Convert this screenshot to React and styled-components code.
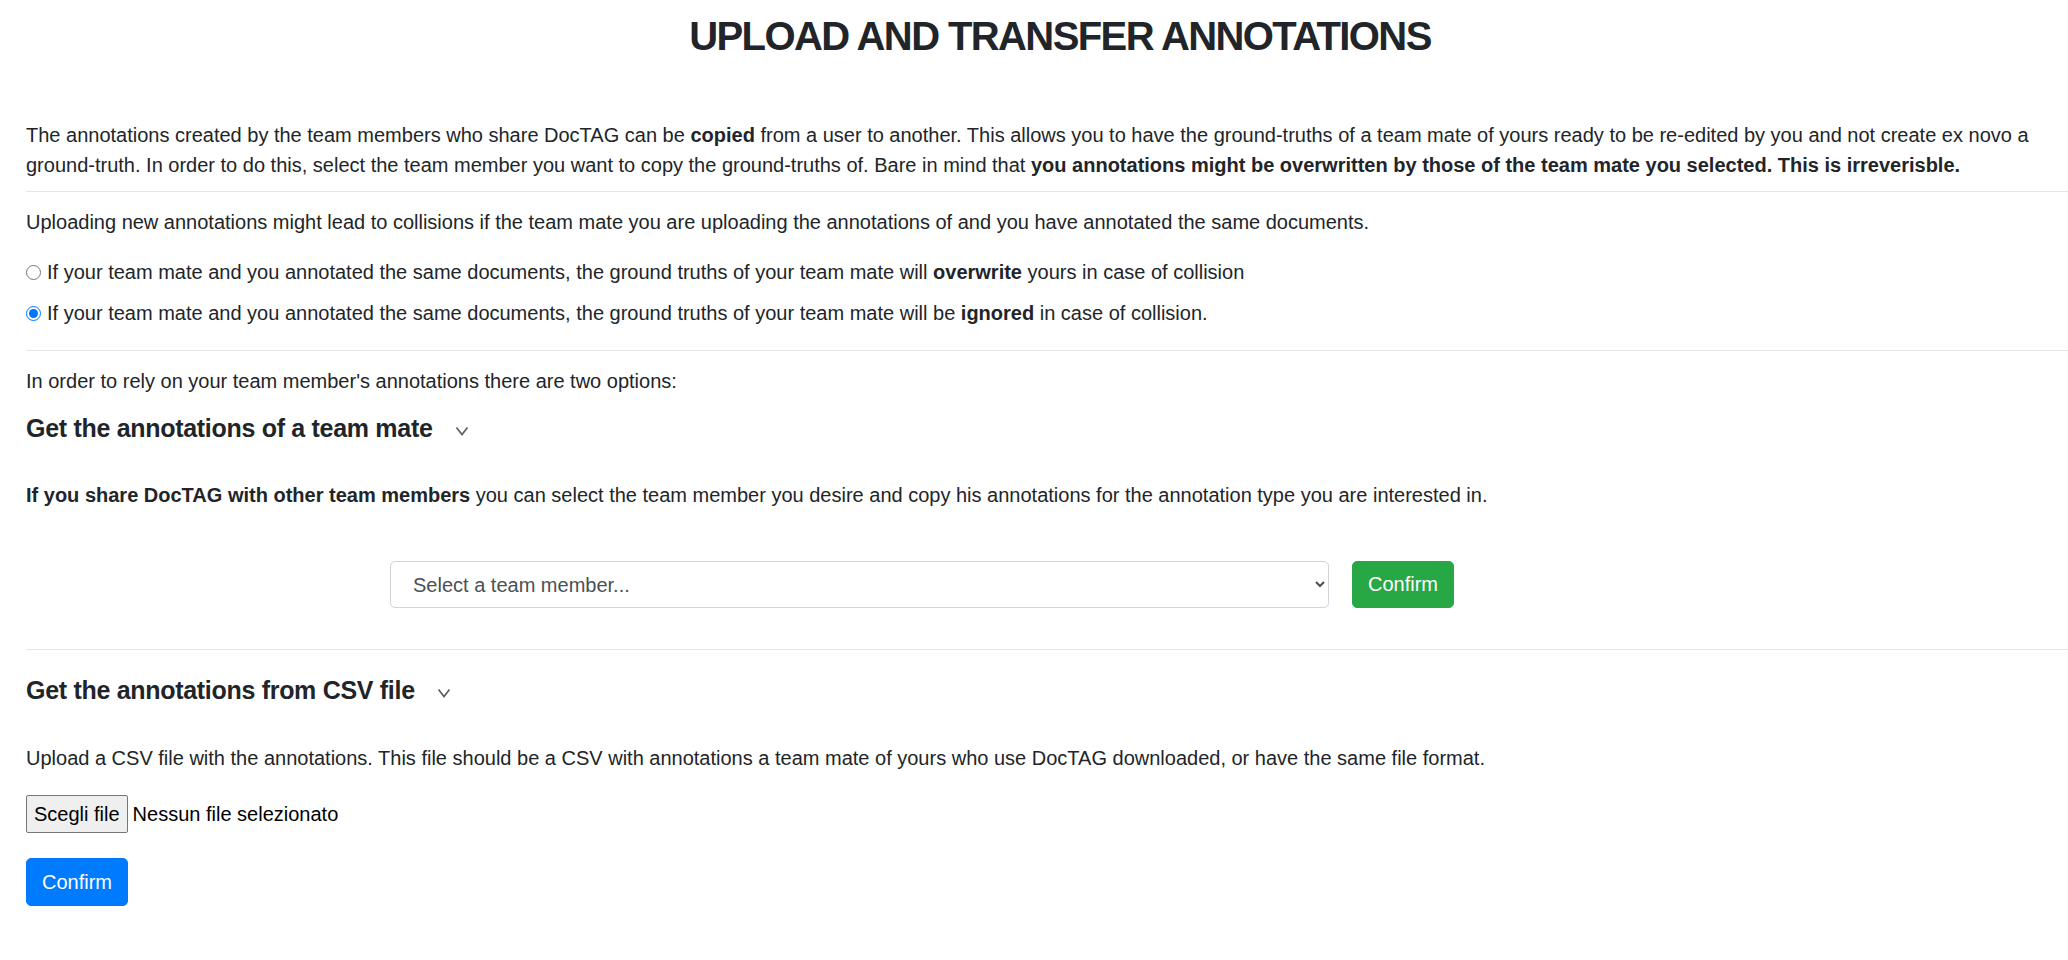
import React from 'react'
import styled, { createGlobalStyle } from 'styled-components'

const GlobalStyle = createGlobalStyle`
  html, body {
    margin: 0;
    padding: 0;
    background: #fff;
    overflow-x: hidden;
  }
  body {
    font-family: "Liberation Sans", Arial, sans-serif;
    font-size: 20px;
    line-height: 30px;
    color: #212529;
  }
  * {
    box-sizing: border-box;
  }
`

const Page = styled.div`
  padding-left: 26px;
  width: calc(100% + 26px);
`
const Title = styled.h2`
  margin: 12px 0 0;
  font-size: 40px;
  line-height: 48px;
  font-weight: 600;
  text-align: center;
  letter-spacing: -1.6px;
`
const Text = styled.p`
  margin: ${props => props.top || 0}px 0 0;
`
const Rule = styled.hr`
  margin: ${props => props.top || 0}px 0 0;
  border: 0;
  border-top: 1px solid rgba(0, 0, 0, 0.1);
`
const RadioRow = styled.label`
  display: flex;
  align-items: center;
  margin-top: ${props => props.top || 0}px;
  input {
    margin: 0 6px 0 0;
    width: 15px;
    height: 15px;
    accent-color: #0075ff;
  }
`
const SectionTitle = styled.h5`
  display: flex;
  align-items: center;
  margin: ${props => props.top || 0}px 0 0;
  font-size: 25px;
  line-height: 30px;
  font-weight: 600;
  letter-spacing: -0.3px;
  svg {
    margin-left: 22px;
    margin-top: 6px;
  }
`
const PickRow = styled.div`
  display: flex;
  align-items: center;
  gap: 23px;
  margin-top: 51px;
  padding-left: 364px;
`
const Select = styled.select`
  width: 939px;
  height: 47px;
  padding: 0 18px;
  font-family: inherit;
  font-size: 20px;
  color: #495057;
  background: #fff;
  border: 1px solid #ced4da;
  border-radius: 5px;
`
const Button = styled.button`
  height: ${props => props.h || 47}px;
  padding: 0 15px;
  font-family: inherit;
  font-size: 20px;
  color: #fff;
  background: ${props => props.color};
  border: 1px solid ${props => props.color};
  border-radius: 5px;
  margin-top: ${props => props.top || 0}px;
  cursor: pointer;
`
const FileRow = styled.label`
  display: flex;
  align-items: center;
  margin-top: 22px;
  input {
    display: none;
  }
`
const FileButton = styled.span`
  display: inline-flex;
  align-items: center;
  height: 38px;
  padding: 0 7px;
  background: #efefef;
  border: 1px solid #767676;
  border-radius: 2px;
  margin-right: 5px;
  color: #000;
`
const FileName = styled.span`
  color: #000;
`
const ButtonBlock = styled.div``

function Chevron() {
  return (
    <svg width="14" height="10" viewBox="0 0 14 10">
      <polyline points="1.5,1.5 7,8.5 12.5,1.5" fill="none" stroke="#5a6268" strokeWidth="1.7" />
    </svg>
  )
}

export default function App() {
  return (
    <Page>
      <GlobalStyle />
      <Title>UPLOAD AND TRANSFER ANNOTATIONS</Title>
      <Text top={60}>
        The annotations created by the team members who share DocTAG can be <b>copied</b> from a user to another. This allows you to have the ground-truths of a team mate of yours ready to be re-edited by you and not create ex novo a ground-truth. In order to do this, select the team member you want to copy the ground-truths of. Bare in mind that <b>you annotations might be overwritten by those of the team mate you selected. This is irreverisble.</b>
      </Text>
      <Rule top={11} />
      <Text top={15}>
        Uploading new annotations might lead to collisions if the team mate you are uploading the annotations of and you have annotated the same documents.
      </Text>
      <RadioRow top={20}>
        <input type="radio" name="collision" />
        <span>If your team mate and you annotated the same documents, the ground truths of your team mate will <b>overwrite</b> yours in case of collision</span>
      </RadioRow>
      <RadioRow top={11}>
        <input type="radio" name="collision" defaultChecked />
        <span>If your team mate and you annotated the same documents, the ground truths of your team mate will be <b>ignored</b> in case of collision.</span>
      </RadioRow>
      <Rule top={22} />
      <Text top={15}>In order to rely on your team member's annotations there are two options:</Text>
      <SectionTitle top={17}>Get the annotations of a team mate <Chevron /></SectionTitle>
      <Text top={37}>
        <b>If you share DocTAG with other team members</b> you can select the team member you desire and copy his annotations for the annotation type you are interested in.
      </Text>
      <PickRow>
        <Select defaultValue="">
          <option value="" disabled>Select a team member...</option>
        </Select>
        <Button color="#28a745">Confirm</Button>
      </PickRow>
      <Rule top={41} />
      <SectionTitle top={25}>Get the annotations from CSV file <Chevron /></SectionTitle>
      <Text top={38}>
        Upload a CSV file with the annotations. This file should be a CSV with annotations a team mate of yours who use DocTAG downloaded, or have the same file format.
      </Text>
      <FileRow>
        <input type="file" />
        <FileButton>Scegli file</FileButton>
        <FileName>Nessun file selezionato</FileName>
      </FileRow>
      <ButtonBlock>
        <Button color="#007bff" h={48} top={25}>Confirm</Button>
      </ButtonBlock>
    </Page>
  )
}
